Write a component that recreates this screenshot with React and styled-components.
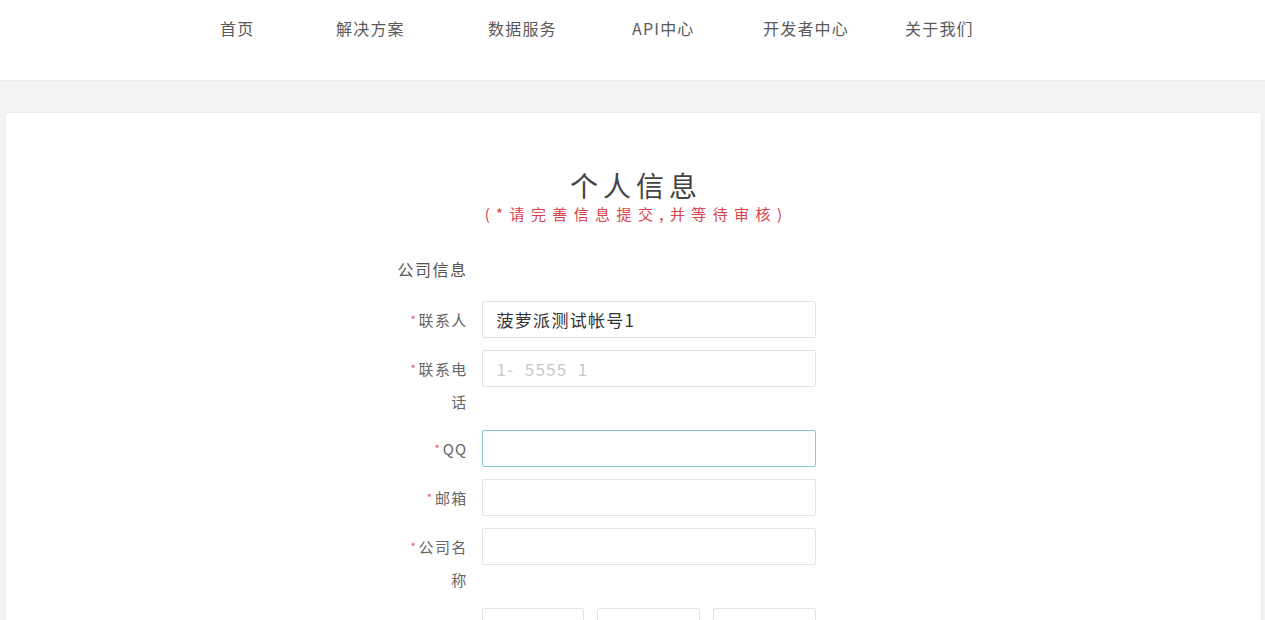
import React from 'react'
import styled, { createGlobalStyle } from 'styled-components'

const GlobalStyle = createGlobalStyle`
    body {
        margin: 0;
        background: #f3f3f3;
        font-family: "Noto Sans CJK SC", "Noto Sans", sans-serif;
        color: #555;
    }
`

/* Styled components: Start */

const HeaderStyled = styled.header`
    height: 80px;
    background: #fff;
    border-bottom: 1px solid #ebebeb;
    display: flex;
    align-items: center;
    padding-left: 220px;
`

const NavItem = styled.a`
    font-size: 16px;
    letter-spacing: 1.2px;
    color: #5a5a5a;
    text-decoration: none;
    width: ${({ w }) => w}px;
    padding-bottom: 24px;
    white-space: nowrap;
`

const MainStyled = styled.main`
    padding: 31px 3px 0 5px;
`

const CardStyled = styled.section`
    background: #fff;
    border: 1px solid #ededed;
    border-bottom: none;
    border-radius: 3px 3px 0 0;
    padding-top: 54px;
    min-height: 600px;
    display: flex;
    flex-direction: column;
    align-items: center;
`

const TitleStyled = styled.h1`
    margin: 0;
    font-size: 28px;
    font-weight: 400;
    letter-spacing: 5px;
    color: #444;
    line-height: 36px;
    padding-left: 5px;
`

const SubTitleStyled = styled.p`
    margin: 0;
    font-size: 15px;
    letter-spacing: 6.4px;
    color: #d9424a;
    line-height: 22px;
    padding-left: 6px;
`

const FormStyled = styled.form`
    width: 420px;
    margin-top: 33px;
    margin-left: -52px;
    display: flex;
    flex-direction: column;
`

const SectionLabel = styled.div`
    font-size: 16px;
    letter-spacing: 1.5px;
    color: #555;
    line-height: 22px;
    margin-bottom: 21px;
`

const RowStyled = styled.div`
    display: flex;
    align-items: flex-start;
    gap: 14px;
    margin-bottom: 12px;
    padding-left: 8px;
`

const LabelStyled = styled.label`
    width: 62px;
    flex-shrink: 0;
    text-align: right;
    font-size: 15px;
    letter-spacing: 1.3px;
    line-height: 33px;
    padding-top: 2px;
    color: #666;
    word-break: break-all;
`

const Star = styled.span`
    color: #e0565b;
    font-size: 11px;
    letter-spacing: 0;
    margin-right: 3px;
    vertical-align: 2px;
`

const FieldGroup = styled.div`
    display: flex;
    gap: 13px;
    width: 334px;
`

const InputStyled = styled.input`
    box-sizing: border-box;
    width: 100%;
    height: 37px;
    border: 1px solid ${({ focused }) => (focused ? '#80ccd0' : '#e3e3e3')};
    border-radius: 2px;
    padding: 0 14px;
    font-size: 17px;
    letter-spacing: 1.3px;
    font-family: "Noto Sans CJK SC", "Noto Sans", sans-serif;
    color: ${({ faded }) => (faded ? '#c8c8c8' : '#333')};
    outline: none;
    background: #fff;
`

/* Styled components: End */

const navItems = [
    ['首页', 116],
    ['解决方案', 152],
    ['数据服务', 144],
    ['API中心', 131],
    ['开发者中心', 142],
    ['关于我们', 100],
]

const Field = ({ label, children }) => (
    <RowStyled>
        <LabelStyled>
            <Star>*</Star>
            {label}
        </LabelStyled>
        {children}
    </RowStyled>
)

export default function App() {
    return (
        <>
            <GlobalStyle />
            <HeaderStyled>
                {navItems.map(([text, w]) => (
                    <NavItem key={text} w={w} href="#">
                        {text}
                    </NavItem>
                ))}
            </HeaderStyled>
            <MainStyled>
                <CardStyled>
                    <TitleStyled>个人信息</TitleStyled>
                    <SubTitleStyled>(*请完善信息提交,并等待审核)</SubTitleStyled>
                    <FormStyled>
                        <SectionLabel>公司信息</SectionLabel>
                        <Field label="联系人">
                            <FieldGroup>
                                <InputStyled defaultValue="菠萝派测试帐号1" />
                            </FieldGroup>
                        </Field>
                        <Field label="联系电话">
                            <FieldGroup>
                                <InputStyled faded defaultValue="1-  5555  1" />
                            </FieldGroup>
                        </Field>
                        <Field label="QQ">
                            <FieldGroup>
                                <InputStyled focused />
                            </FieldGroup>
                        </Field>
                        <Field label="邮箱">
                            <FieldGroup>
                                <InputStyled />
                            </FieldGroup>
                        </Field>
                        <Field label="公司名称">
                            <FieldGroup>
                                <InputStyled />
                            </FieldGroup>
                        </Field>
                        <Field label="地区">
                            <FieldGroup>
                                <InputStyled />
                                <InputStyled />
                                <InputStyled />
                            </FieldGroup>
                        </Field>
                    </FormStyled>
                </CardStyled>
            </MainStyled>
        </>
    )
}
